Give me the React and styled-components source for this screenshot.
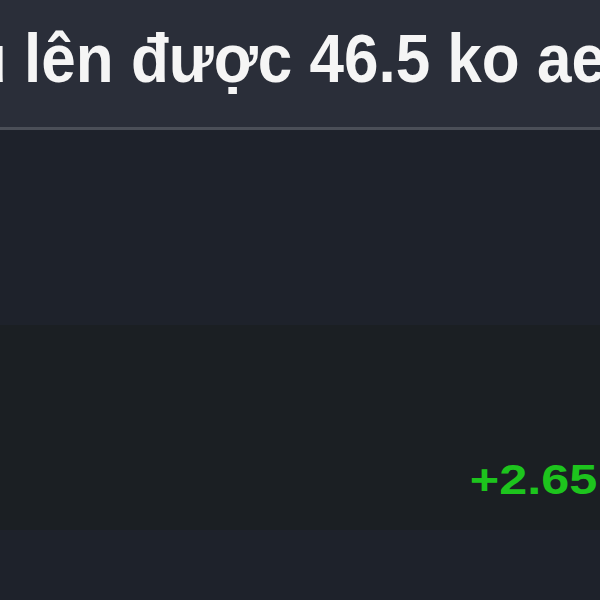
import React from 'react';
import styled, { createGlobalStyle } from 'styled-components';

const GlobalStyle = createGlobalStyle`
    html, body {
        margin:0;
        padding:0;
        background:#1e222b;
        overflow:hidden;
    }
`;

const Page = styled.div`
    width:600px;
    height:600px;
    display:flex;
    flex-direction:column;
    overflow:hidden;
    background:#1e222b;
`;
const Header = styled.div`
    height:130px;
    flex-shrink:0;
    display:flex;
    align-items:flex-start;
    padding-top:27px;
    box-sizing:border-box;
    background:#2a2e39;
    border-bottom:3px solid #4b4f58;
    overflow:hidden;
    white-space:nowrap;
`;
const Title = styled.span`
    display:inline-block;
    margin-left:-31px;
    font-family:'Liberation Sans', Arial, sans-serif;
    font-weight:700;
    font-size:62px;
    line-height:1;
    color:#f5f5f5;
    transform:scaleY(1.12);
`;
const Gap = styled.div`
    height:195px;
    flex-shrink:0;
`;
const QuoteRow = styled.div`
    height:205px;
    flex-shrink:0;
    display:flex;
    justify-content:flex-end;
    align-items:flex-end;
    padding:0 3px 29px 0;
    box-sizing:border-box;
    background:#1b1f23;
    overflow:hidden;
`;
const Change = styled.span`
    display:inline-block;
    font-family:'Liberation Sans', Arial, sans-serif;
    font-weight:700;
    font-size:42px;
    line-height:1;
    color:${p => p.up ? '#1dc41d' : '#e0373c'};
    white-space:nowrap;
    transform:scaleX(1.2);
    transform-origin:right center;
`;

const App = () => {
    return (
        <Page>
            <GlobalStyle/>
            <Header>
                <Title>u lên được 46.5 ko ae</Title>
            </Header>
            <Gap/>
            <QuoteRow>
                <Change up>+2.65</Change>
            </QuoteRow>
        </Page>
    );
};

export default App;
